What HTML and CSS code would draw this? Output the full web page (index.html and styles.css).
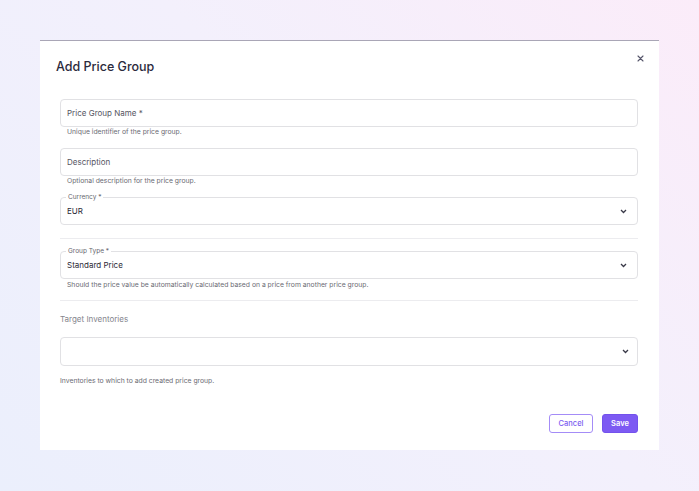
FILE: index.html
```html
<!DOCTYPE html>
<html lang="en">
<head>
    <meta charset="UTF-8">
    <meta name="viewport" content="width=device-width, initial-scale=1.0">
    <title>Add Price Group</title>
    <link rel="stylesheet" href="styles.css">
</head>
<body>

    <!-- Dialog -->
    <div class="dialog">
        <div class="dialog-header">
            <h2>Add Price Group</h2>
            <button class="close-button" aria-label="Close">
                <svg width="7" height="7" viewBox="0 0 7 7"><path d="M1 1L6 6M6 1L1 6" stroke="#55556a" stroke-width="1.1" stroke-linecap="round"/></svg>
            </button>
        </div>

        <div class="dialog-body">
            <div class="field">
                <input type="text" class="text-input" placeholder="Price Group Name *">
                <p class="helper">Unique identifier of the price group.</p>
            </div>

            <div class="field">
                <input type="text" class="text-input" placeholder="Description">
                <p class="helper">Optional description for the price group.</p>
            </div>

            <fieldset class="outlined">
                <legend>Currency *</legend>
                <div class="select-value">
                    <span>EUR</span>
                    <svg class="chevron" width="7" height="5" viewBox="0 0 7 5"><path d="M1 1L3.5 3.5L6 1" fill="none" stroke="#3a3a48" stroke-width="1.3"/></svg>
                </div>
            </fieldset>

            <hr class="divider">

            <fieldset class="outlined">
                <legend>Group Type *</legend>
                <div class="select-value">
                    <span>Standard Price</span>
                    <svg class="chevron" width="7" height="5" viewBox="0 0 7 5"><path d="M1 1L3.5 3.5L6 1" fill="none" stroke="#3a3a48" stroke-width="1.3"/></svg>
                </div>
            </fieldset>
            <p class="helper below">Should the price value be automatically calculated based on a price from another price group.</p>

            <hr class="divider tight">

            <label class="section-label">Target Inventories</label>
            <div class="select-box">
                <svg class="chevron" width="7" height="5" viewBox="0 0 7 5"><path d="M1 1L3.5 3.5L6 1" fill="none" stroke="#3a3a48" stroke-width="1.3"/></svg>
            </div>
            <p class="helper flush">Inventories to which to add created price group.</p>
        </div>

        <div class="dialog-footer">
            <button class="btn btn-outline">Cancel</button>
            <button class="btn btn-primary">Save</button>
        </div>
    </div>

</body>
</html>
```

FILE: styles.css
```css
/* Basic Reset */
* { margin: 0; padding: 0; box-sizing: border-box; }

body {
    font-family: Inter, "Noto Sans", sans-serif;
    color: #2d2b3a;
    min-height: 491px;
    padding: 40px 40px 0 40px;
    background: linear-gradient(225deg, #fbecf9 0%, #f3f0fc 45%, #ebeffc 100%);
}

/* Dialog */
.dialog {
    width: 619px;
    background-color: #fff;
    border-top: 1px solid #a9a6b6;
}
.dialog-header {
    display: flex;
    justify-content: space-between;
    align-items: flex-start;
    height: 58px;
    padding: 17px 15px 0 16px;
}
.dialog-header h2 {
    font-size: 12.5px;
    font-weight: 500;
    line-height: 18px;
    color: #2b2a3c;
}
.close-button {
    background: none;
    border: none;
    cursor: pointer;
    width: 7px;
    height: 7px;
    margin-top: -3px;
    display: flex;
}

.dialog-body {
    padding: 0 21px 0 20px;
}

/* Fields */
.field {
    margin-bottom: 11px;
}
.field + .outlined {
    margin-top: -4px;
}
.text-input {
    display: block;
    width: 100%;
    height: 28px;
    padding: 0 6px;
    border: 1px solid #e1e1e4;
    border-radius: 4px;
    font-family: inherit;
    font-size: 8px;
    color: #333;
    outline: none;
}
.text-input::placeholder {
    color: #55555f;
}
.helper {
    font-size: 6.8px;
    line-height: 10px;
    color: #6b6b73;
    padding-left: 7px;
}
.helper.below {
    margin-top: 1px;
}
.helper.flush {
    padding-left: 0;
    margin-top: 10px;
}

.outlined {
    border: 1px solid #e1e1e4;
    border-radius: 4px;
    padding: 0 10px 3px 4px;
    min-width: 0;
}
.outlined legend {
    font-size: 6.5px;
    line-height: 8px;
    color: #66666e;
    padding: 0 2px;
    margin-left: 1px;
}
.select-value {
    display: flex;
    justify-content: space-between;
    align-items: center;
    height: 20px;
    padding-left: 2px;
    font-size: 8px;
    color: #2b2a36;
}
.chevron {
    display: block;
}

.divider {
    border: none;
    border-top: 1px solid #ececef;
    margin: 13px 0 12px 0;
}
.divider.tight {
    margin-top: 10px;
}
.divider + .outlined {
    margin-top: -4px;
}

.section-label {
    display: block;
    font-size: 8px;
    line-height: 12px;
    color: #85858d;
    margin-top: 9px;
    margin-bottom: 12px;
}
.select-box {
    height: 29px;
    border: 1px solid #e1e1e4;
    border-radius: 4px;
    display: flex;
    justify-content: flex-end;
    align-items: center;
    padding-right: 8px;
}

/* Footer */
.dialog-footer {
    display: flex;
    justify-content: flex-end;
    gap: 9px;
    padding: 28px 21px 17px 0;
}
.btn {
    height: 19px;
    border-radius: 3px;
    font-family: inherit;
    font-size: 7.5px;
    font-weight: 500;
    cursor: pointer;
}
.btn-outline {
    width: 44px;
    background-color: #fff;
    color: #7b5cf0;
    border: 1px solid #a48cf7;
}
.btn-primary {
    width: 36px;
    background-color: #7d5af3;
    color: #fff;
    border: 1px solid #7352ec;
    font-weight: 600;
}
```
